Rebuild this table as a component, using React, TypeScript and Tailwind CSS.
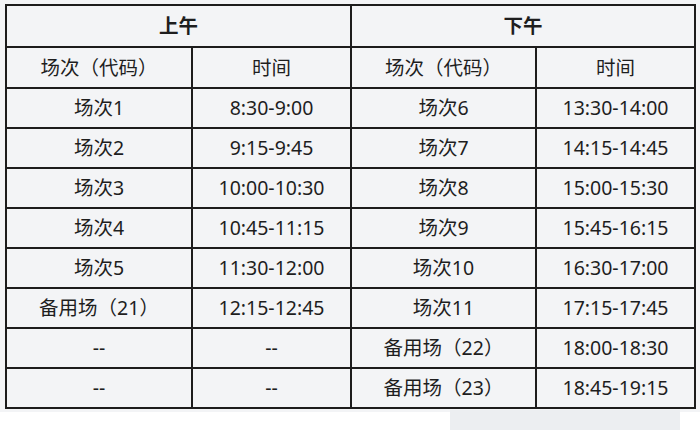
import React from "react";

const am = [
  ["场次1", "8:30-9:00"],
  ["场次2", "9:15-9:45"],
  ["场次3", "10:00-10:30"],
  ["场次4", "10:45-11:15"],
  ["场次5", "11:30-12:00"],
  ["备用场（21）", "12:15-12:45"],
  ["--", "--"],
  ["--", "--"],
];
const pm = [
  ["场次6", "13:30-14:00"],
  ["场次7", "14:15-14:45"],
  ["场次8", "15:00-15:30"],
  ["场次9", "15:45-16:15"],
  ["场次10", "16:30-17:00"],
  ["场次11", "17:15-17:45"],
  ["备用场（22）", "18:00-18:30"],
  ["备用场（23）", "18:45-19:15"],
];

export default function App() {
  const cell = "border-2 border-[#1c1c1c] text-center align-middle p-0";
  return (
    <div
      className="relative w-[700px] h-[447px] bg-white text-[#1e1e1e] overflow-hidden"
      style={{ fontFamily: '"Noto Sans", "Noto Sans CJK SC", sans-serif' }}
    >
      <div className="h-[412px] bg-[#f3f4f6] pt-[4px] pl-[5px]">
        <table className="border-collapse table-fixed w-[689px] text-[19.5px] leading-none">
          <colgroup>
            <col className="w-[186px]" />
            <col className="w-[159px]" />
            <col className="w-[185px]" />
            <col className="w-[159px]" />
          </colgroup>
          <tbody>
            <tr className="h-[42px]">
              <td colSpan={2} className={`${cell} font-bold`}>上午</td>
              <td colSpan={2} className={`${cell} font-bold`}>下午</td>
            </tr>
            <tr className="h-[41px]">
              <td className={cell}>场次（代码）</td>
              <td className={cell}>时间</td>
              <td className={cell}>场次（代码）</td>
              <td className={cell}>时间</td>
            </tr>
            {am.map((r, i) => (
              <tr key={i} className="h-[40px]">
                <td className={cell}>{r[0]}</td>
                <td className={cell}>{r[1]}</td>
                <td className={cell}>{pm[i][0]}</td>
                <td className={cell}>{pm[i][1]}</td>
              </tr>
            ))}
          </tbody>
        </table>
      </div>
      <div className="absolute left-[450px] top-[410px] w-[230px] h-[20px] bg-[#eceef1]" />
    </div>
  );
}
